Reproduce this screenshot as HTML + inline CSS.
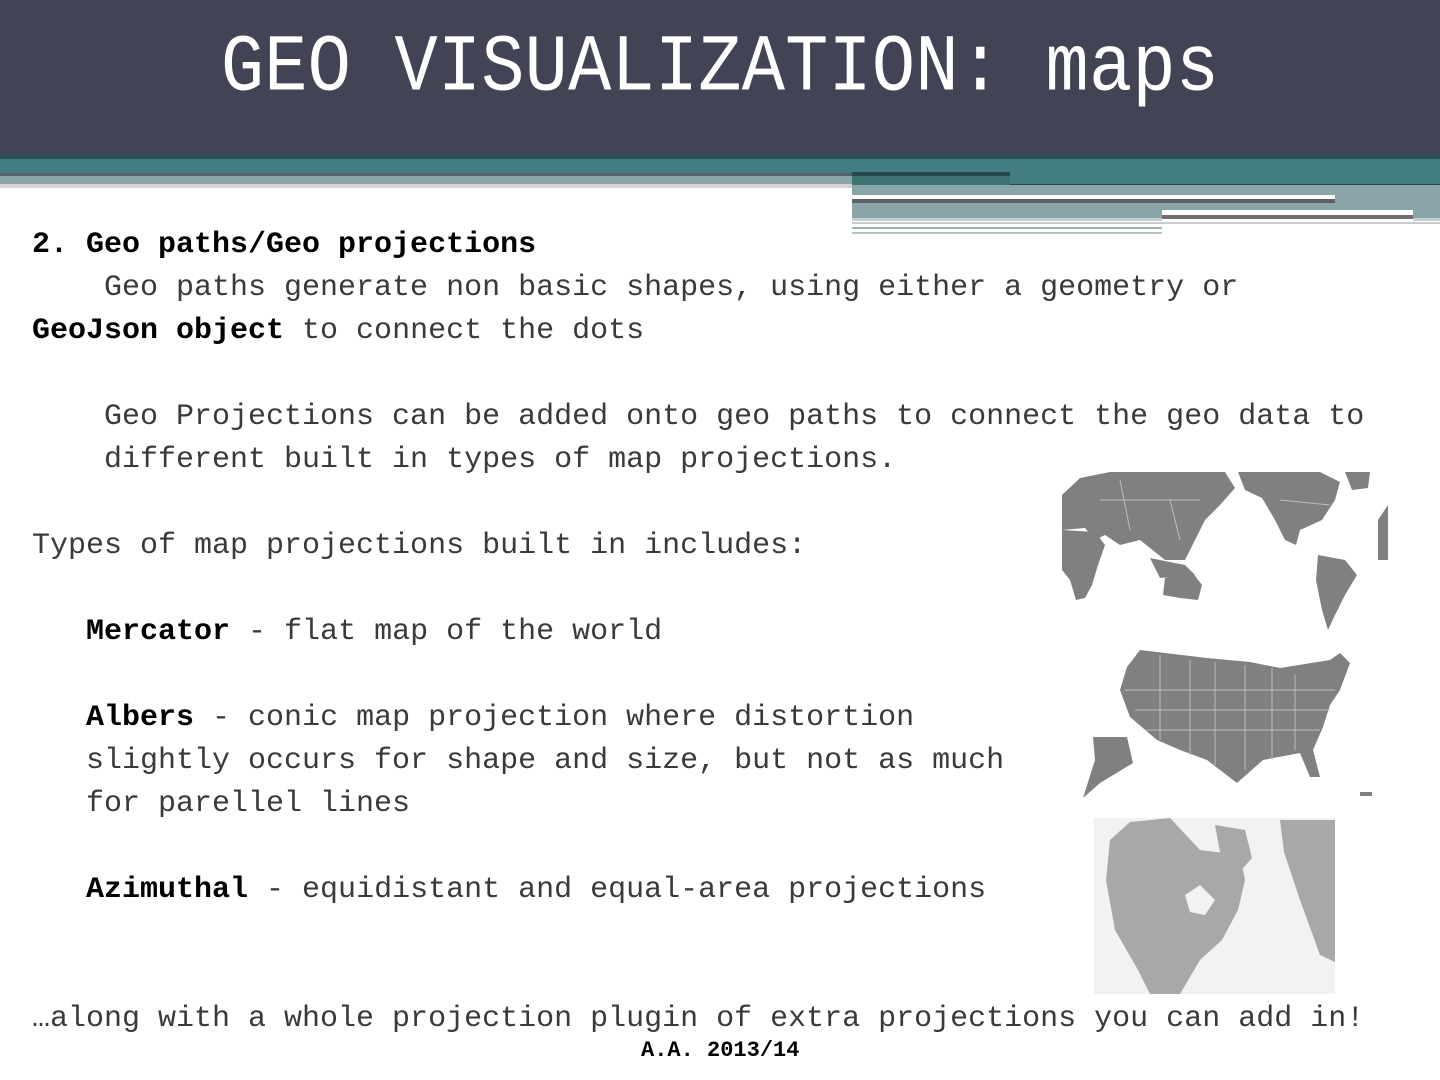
<!DOCTYPE html>
<html><head><meta charset="utf-8"><style>
*{margin:0;padding:0;box-sizing:border-box}
body{width:1440px;height:1080px;background:#fff;position:relative;overflow:hidden;font-family:"Liberation Mono","Noto Sans CJK JP",monospace}
.a{position:absolute}
.title{left:0;width:1440px;top:22px;text-align:center;color:#fff;font-size:72px;line-height:92px;transform:scaleY(1.12);letter-spacing:0.2px}
.t{position:absolute;left:32px;font-size:30px;line-height:43px;color:#3a3a3a;white-space:pre}
.t b{color:#000;font-weight:bold}
</style></head><body>
<div class="a" style="left:0;top:0;width:1440px;height:154px;background:#424455"></div>
<div class="a" style="left:0;top:154px;width:1440px;height:5px;background:#2c5156"></div>
<div class="a" style="left:0;top:159px;width:1440px;height:14px;background:#427d80"></div>
<div class="a" style="left:0;top:173px;width:852px;height:3px;background:#56626a"></div>
<div class="a" style="left:0;top:176px;width:852px;height:8px;background:#8aa5a8"></div>
<div class="a" style="left:0;top:184px;width:852px;height:4px;background:#d8d2d4"></div>
<div class="a" style="left:852px;top:173px;width:588px;height:12px;background:#427d80"></div>
<div class="a" style="left:852px;top:173px;width:158px;height:12px;background:#3d7172"></div>
<div class="a" style="left:852px;top:172px;width:158px;height:4px;background:#26484a"></div>
<div class="a" style="left:1010px;top:184px;width:430px;height:4px;background:#26484a"></div>
<div class="a" style="left:852px;top:185px;width:588px;height:33px;background:#8aa5a8"></div>
<div class="a" style="left:852px;top:195px;width:483px;height:4px;background:#fff"></div>
<div class="a" style="left:852px;top:199px;width:483px;height:4px;background:#5a6368"></div>
<div class="a" style="left:1162px;top:210px;width:251px;height:5px;background:#fff"></div>
<div class="a" style="left:1162px;top:215px;width:251px;height:4px;background:#6e7070"></div>
<div class="a" style="left:852px;top:218px;width:310px;height:3px;background:#c3cfd1"></div>
<div class="a" style="left:1413px;top:218px;width:27px;height:3px;background:#c3cfd1"></div>
<div class="a" style="left:852px;top:222px;width:588px;height:2px;background:#c8cccd"></div>
<div class="a" style="left:852px;top:227px;width:310px;height:2px;background:#9eb2b4"></div>
<div class="a" style="left:852px;top:232px;width:310px;height:2px;background:#b6c3c5"></div>

<div class="a title">GEO VISUALIZATION: maps</div>

<div class="t" style="top:224px"><b>2. Geo paths/Geo projections</b>
    Geo paths generate non basic shapes, using either a geometry or
<b>GeoJson object</b> to connect the dots

    Geo Projections can be added onto geo paths to connect the geo data to
    different built in types of map projections.

Types of map projections built in includes:

   <b>Mercator</b> - flat map of the world

   <b>Albers</b> - conic map projection where distortion
   slightly occurs for shape and size, but not as much
   for parellel lines

   <b>Azimuthal</b> - equidistant and equal-area projections


…along with a whole projection plugin of extra projections you can add in!</div>
<div class="a" style="left:641px;top:1038px;font-size:22px;line-height:26px;font-weight:bold;color:#000">A.A. 2013/14</div>

<svg class="a" style="left:0;top:0" width="1440" height="1080">
<g fill="#808080">
<polygon points="1062,495 1080,478 1110,472 1225,472 1235,488 1220,505 1205,520 1195,540 1185,560 1165,560 1150,548 1140,540 1120,545 1105,535 1095,540 1085,528 1062,530"/>
<polygon points="1062,530 1095,532 1105,545 1098,565 1092,585 1085,598 1076,600 1070,580 1062,570"/>
<polygon points="1165,578 1192,572 1202,585 1198,600 1180,598 1163,595"/>
<polygon points="1150,558 1185,565 1195,575 1160,578"/>
<polygon points="1238,472 1320,472 1340,482 1335,500 1322,520 1300,530 1296,545 1285,540 1275,520 1262,498 1245,490"/>
<polygon points="1318,555 1345,560 1357,575 1345,595 1335,615 1328,630 1322,610 1316,580"/>
<polygon points="1345,472 1370,472 1368,488 1352,490"/>
<polygon points="1378,520 1388,505 1388,560 1378,560"/>
<polygon points="1127,667 1140,650 1207,658 1250,662 1280,668 1330,660 1340,653 1350,663 1340,690 1330,705 1323,727 1313,750 1320,777 1310,777 1300,753 1263,760 1237,783 1207,760 1180,750 1157,740 1130,717 1120,690"/>
<polygon points="1093,737 1127,737 1133,763 1100,783 1083,798 1095,760"/>
<rect x="1360" y="792" width="12" height="4"/>
</g>
<g stroke="#bdbdbd" stroke-width="1" fill="none">
<path d="M1160 655 L1160 740 M1190 660 L1190 755 M1215 662 L1215 765 M1245 665 L1245 770 M1272 668 L1272 760 M1295 675 L1295 750 M1125 690 L1335 690 M1135 710 L1330 710 M1145 730 L1320 730"/>
<path d="M1100 500 L1200 500 M1120 480 L1130 530 M1170 500 L1180 540 M1280 500 L1330 505"/>
</g>
<rect x="1094" y="818" width="241" height="176" fill="#f2f2f2"/>
<g fill="#a8a8a8">
<polygon points="1110,840 1130,822 1170,818 1200,850 1240,855 1245,880 1238,910 1222,940 1200,960 1180,994 1150,994 1138,970 1115,930 1106,880"/>
<polygon points="1215,825 1245,830 1252,858 1236,876 1220,852"/>
<polygon points="1280,820 1335,820 1335,962 1320,955 1300,900 1284,852"/>
</g>
<g fill="#f2f2f2"><polygon points="1185,895 1200,885 1215,900 1205,915 1190,912"/></g>
</svg>
</body></html>
